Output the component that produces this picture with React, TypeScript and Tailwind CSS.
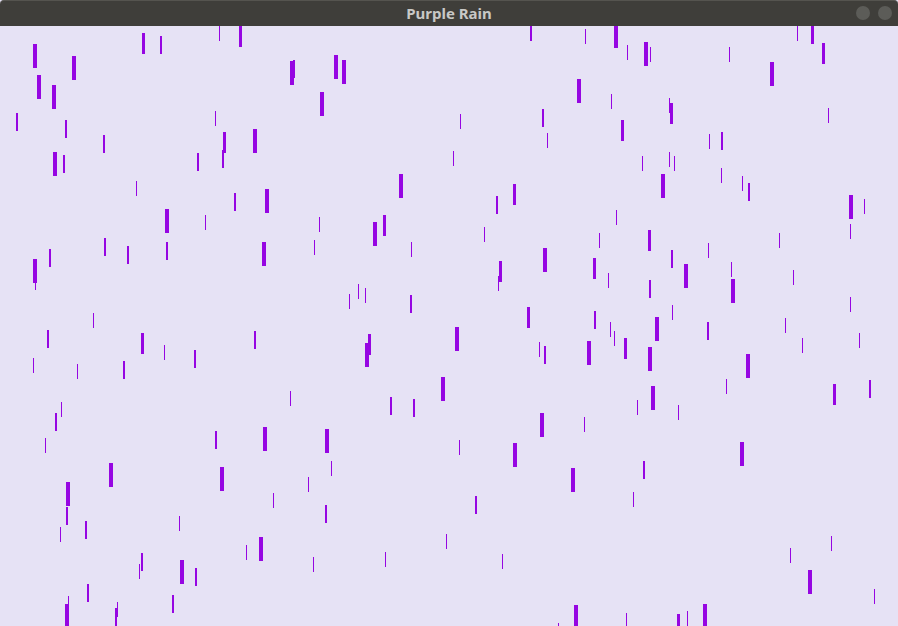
import React from "react";

// [x, y, width]; length derived from width
const drops: [number, number, number][] = [
  [219, 26, 1], [239, 26, 3], [142, 33, 3], [160, 36, 2], [33, 44, 4], [72, 56, 4],
  [290, 61, 4], [293, 60, 2], [37, 75, 4], [52, 85, 4], [16, 113, 2], [215, 111, 1],
  [65, 120, 2], [103, 135, 2], [223, 132, 3], [253, 129, 4], [53, 152, 4], [63, 155, 2],
  [197, 153, 2], [222, 150, 2], [136, 181, 1], [234, 193, 2], [265, 189, 4], [165, 209, 4],
  [205, 215, 1],
  [530, 23, 2], [585, 29, 1], [334, 55, 4], [342, 60, 4], [320, 92, 4], [460, 114, 1],
  [542, 109, 2], [547, 133, 1], [577, 79, 4], [453, 151, 1], [399, 174, 4], [496, 196, 2],
  [513, 184, 3], [319, 217, 1], [373, 222, 4], [383, 215, 3],
  [614, 24, 4], [627, 45, 1], [644, 42, 4], [650, 47, 1], [729, 47, 1], [770, 62, 4],
  [797, 26, 1], [811, 23, 3], [822, 43, 3], [611, 94, 1], [669, 98, 1], [670, 103, 3],
  [828, 108, 1], [621, 120, 3], [709, 134, 1], [721, 132, 2], [642, 156, 1], [669, 152, 1],
  [674, 156, 1], [721, 168, 1], [742, 176, 1], [748, 183, 2], [661, 174, 4], [849, 195, 4],
  [864, 199, 1], [616, 210, 1], [850, 224, 1],
  [104, 238, 2], [127, 246, 2], [166, 242, 2], [262, 242, 4], [49, 249, 2], [33, 259, 4],
  [35, 275, 1], [93, 313, 1], [47, 330, 2], [141, 333, 3], [164, 345, 1], [194, 350, 2],
  [254, 331, 2], [33, 358, 1], [77, 364, 1], [123, 361, 2], [290, 391, 1], [61, 402, 1],
  [55, 413, 2],
  [314, 240, 1], [411, 242, 1], [484, 227, 1], [599, 233, 1], [543, 248, 4], [593, 258, 3],
  [499, 261, 3], [498, 276, 1], [358, 284, 1], [365, 288, 1], [349, 294, 1], [410, 295, 2],
  [527, 307, 3], [594, 311, 2], [455, 327, 4], [368, 334, 3], [365, 343, 4], [539, 342, 1],
  [544, 346, 2], [587, 341, 4], [441, 377, 4], [390, 397, 2], [413, 399, 2], [540, 413, 4],
  [584, 417, 1],
  [648, 230, 3], [671, 250, 2], [708, 243, 1], [779, 233, 1], [684, 264, 4], [731, 262, 1],
  [731, 279, 4], [608, 273, 1], [649, 280, 2], [793, 270, 1], [672, 305, 1], [850, 297, 1],
  [610, 322, 1], [614, 331, 1], [624, 338, 3], [655, 317, 4], [707, 322, 2], [785, 318, 1],
  [802, 338, 1], [859, 333, 1], [648, 347, 4], [746, 354, 4], [726, 379, 1], [833, 384, 3],
  [869, 380, 2], [651, 386, 4], [637, 400, 1], [678, 405, 1],
  [45, 438, 1], [215, 431, 2], [263, 427, 4], [109, 463, 4], [220, 467, 4], [273, 493, 1],
  [66, 482, 4], [66, 507, 2], [85, 521, 2], [60, 527, 1], [179, 516, 1], [246, 545, 1],
  [259, 537, 4], [141, 553, 2], [139, 564, 1], [180, 560, 4], [195, 568, 2], [87, 584, 2],
  [68, 596, 1], [65, 604, 4], [117, 602, 1], [115, 608, 2], [172, 595, 2],
  [325, 429, 4], [459, 440, 1], [513, 443, 4], [571, 468, 4], [331, 461, 1], [308, 477, 1],
  [325, 505, 2], [475, 496, 2], [446, 534, 1], [313, 557, 1], [385, 552, 1], [502, 554, 1],
  [574, 605, 4], [558, 623, 1],
  [740, 442, 4], [643, 461, 2], [633, 492, 1], [831, 536, 1], [790, 548, 1], [808, 570, 4],
  [874, 589, 1], [626, 613, 1], [677, 614, 3], [687, 611, 1], [703, 604, 4],
];

const lenFor: Record<number, number> = { 1: 15, 2: 18, 3: 21, 4: 24 };

export default function App() {
  return (
    <div className="w-[898px] h-[626px] flex flex-col overflow-hidden bg-[#e6e2f5]">
      <div className="h-[26px] shrink-0 relative flex items-center justify-center bg-[#3f3e3a] border-t border-[#55544f] rounded-t-[4px]">
        <span
          className="text-[15px] font-bold text-[#c8c8c6] leading-none"
          style={{ fontFamily: '"Noto Sans", "Open Sans", sans-serif' }}
        >
          Purple Rain
        </span>
        <div className="absolute right-[6px] top-[5px] flex gap-[8px]">
          <div className="w-[14px] h-[14px] rounded-full bg-[#5c5c58]" />
          <div className="w-[14px] h-[14px] rounded-full bg-[#5c5c58]" />
        </div>
      </div>
      <div className="flex-1 relative">
        <svg width="898" height="600" viewBox="0 26 898 600" className="block">
          {drops.map(([x, y, w], i) => (
            <rect key={i} x={x} y={y} width={w} height={lenFor[w]} fill="#9606e2" />
          ))}
        </svg>
      </div>
    </div>
  );
}
